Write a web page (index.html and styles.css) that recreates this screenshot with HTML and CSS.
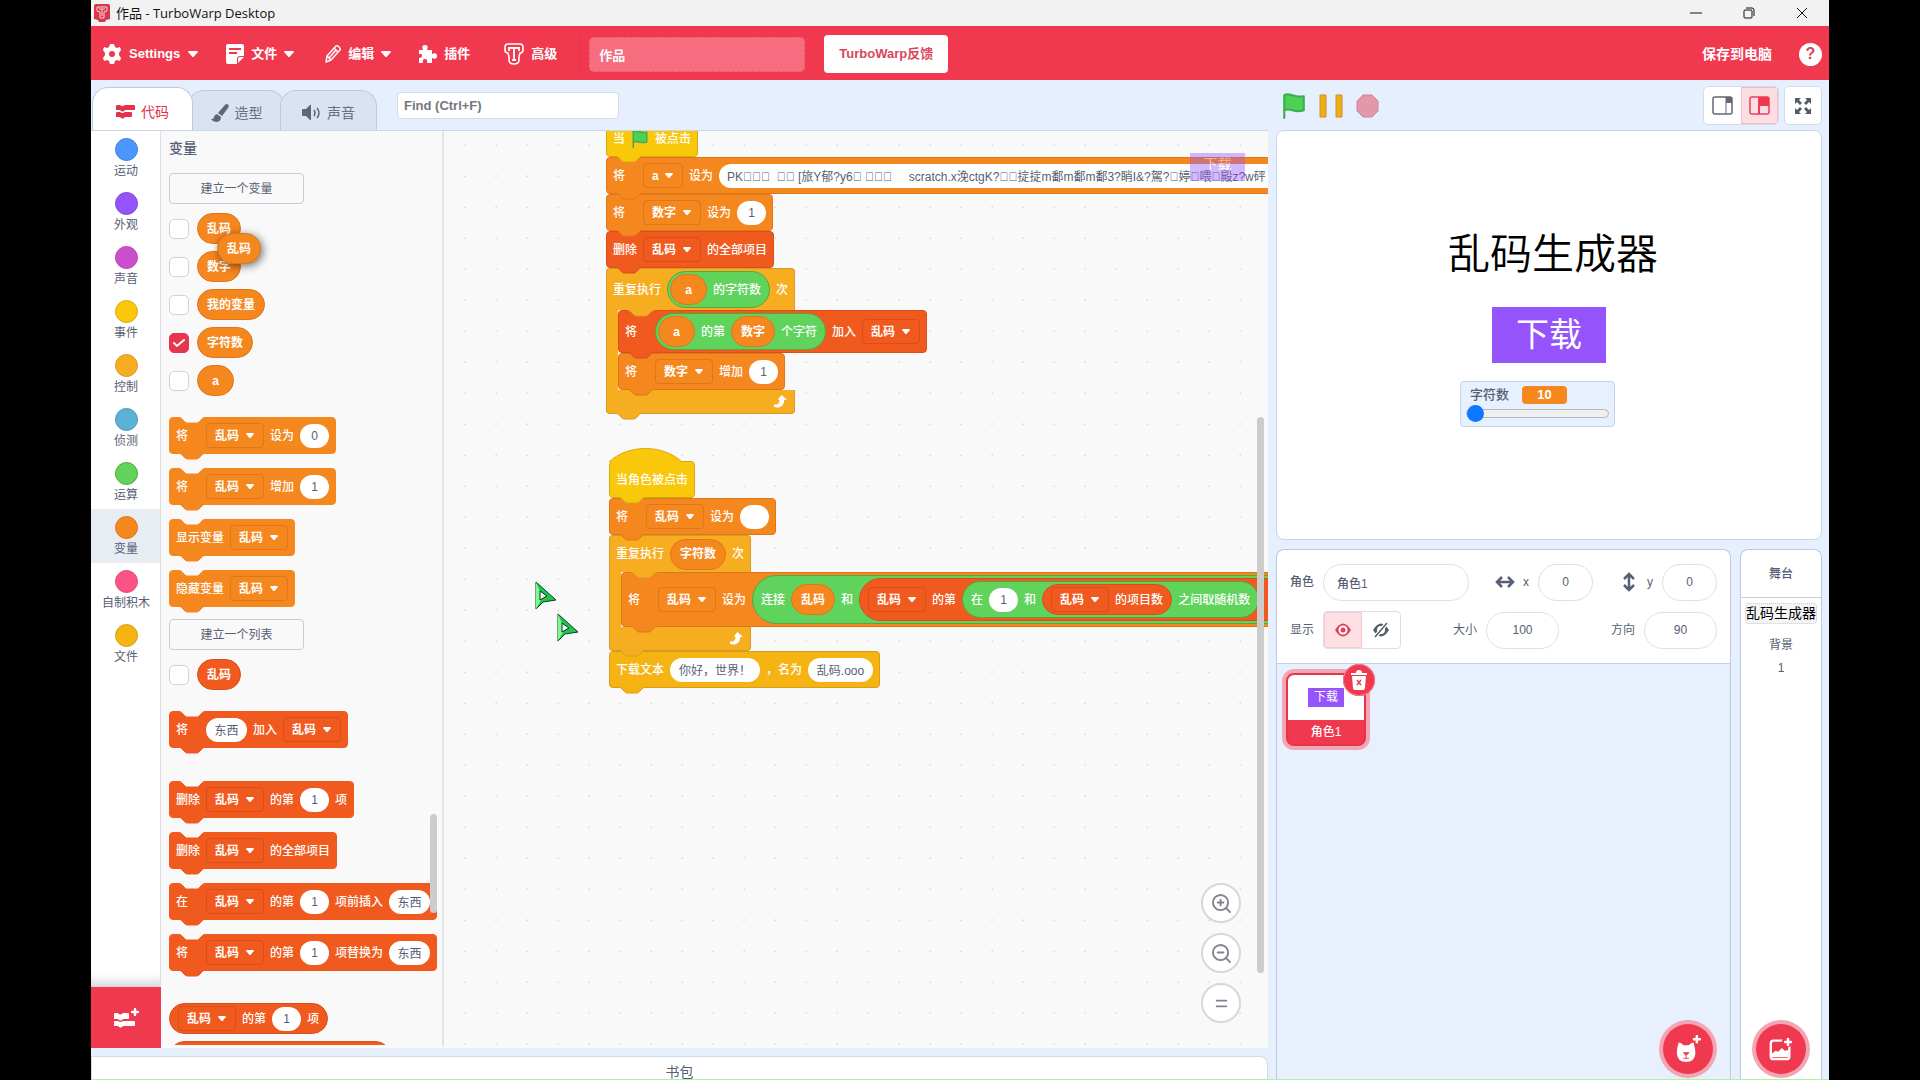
FILE: index.html
```html
<!DOCTYPE html>
<html lang="zh-CN">
<head>
<meta charset="utf-8">
<title>作品 - TurboWarp Desktop</title>
<link rel="stylesheet" href="styles.css">
</head>
<body>
<svg class="defs" aria-hidden="true">
  <symbol id="tab" viewBox="0 0 28 7"><path d="M0 0c2 0 3 1 4 2l3 3c1 1 2 1 3 1h8c1 0 2 0 3-1l3-3c1-1 2-2 4-2"/></symbol>
  <symbol id="hat" viewBox="0 0 74 15"><path d="M0 14C19-4 54-4 73 14"/></symbol>
  <symbol id="flag" viewBox="0 0 22 24"><path d="M2 23V2c5-3 9 3 18 1v13c-9 3-12-3-18 0" fill="#4cd155" stroke="#3fae50" stroke-width="2" stroke-linejoin="round" stroke-linecap="round"/></symbol>
  <symbol id="caret" viewBox="0 0 10 6"><path d="M1 0h8q2 1 0 2L6 5.500q-1 1-2 0L1 2q-2-1 0-2z" fill="#fff"/></symbol>
  <symbol id="loop" viewBox="0 0 14 14"><path d="M0 10c4 1 6-1 6-5H4l4-5 6 5h-3c0 6-4 10-11 8z" fill="#fff"/></symbol>
  <symbol id="cursor" viewBox="0 0 22 29"><path d="M1 1v27l7-7 13-2z" fill="#1fc64a" stroke="#0b3d1a"/><path d="M1 1l5 12v6l-5 9z" fill="#7dfa8f"/><path d="M5 10l7 5-7 4z" fill="#e9ffe9" stroke="#123"/></symbol>
  <symbol id="plus" viewBox="0 0 8 8"><path d="M4 1v6M1 4h6" stroke="#fff" stroke-width="2.400" stroke-linecap="round"/></symbol>
  <symbol id="tee" viewBox="0 0 20 22"><path d="M4 1h12q3 0 3 3v3q0 3-3 3v1q-1 1-1 3v3q0 4-5 4t-5-4v-3q0-2-1-3v-1q-3 0-3-3V4q0-3 3-3z" fill="none" stroke="#fff" stroke-width="1.600"/><path d="M5 8V5h10v3M10 5v11M8 17h4" fill="none" stroke="#fff" stroke-width="1.800"/></symbol>
</svg>

<div class="window">
  <header class="titlebar">
    <svg class="app-icon" viewBox="0 0 16 18"><path d="M0 2q0-2 2-2h12q2 0 2 2v13l-4 1-1 2H5l-1-2-4-1z" fill="#d8374c"/><path d="M3 3h10v4l-3 1v6H6V8L3 7z" fill="none" stroke="#fbd3d8"/><path d="M5 5h6M8 5v7" stroke="#fbd3d8"/></svg>
    <h1>作品 - TurboWarp Desktop</h1>
    <div class="win-buttons">
      <button aria-label="最小化"><svg width="12" height="12"><path d="M0 6h12" stroke="#111"/></svg></button>
      <button aria-label="还原"><svg width="12" height="12" fill="none" stroke="#111"><rect x="1" y="3" width="8" height="8" rx="1"/><path d="M3 1h6q2 0 2 2v6"/></svg></button>
      <button aria-label="关闭"><svg width="12" height="12"><path d="M1 1l10 10M11 1L1 11" stroke="#111"/></svg></button>
    </div>
  </header>

  <nav class="menubar">
    <button class="m-set"><svg width="18" height="20" viewBox="0 0 18 20"><path d="M7 0h4l1 3 2 1 3-1 1 3-2 3v2l2 3-1 3-3-1-2 1-1 3H7l-1-3-2-1-3 1-1-3 2-3V9L0 6l1-3 3 1 2-1z" fill="#fff"/><circle cx="9" cy="10" r="3" fill="#f0384f"/></svg><span>Settings</span><svg class="caret"><use href="#caret"/></svg></button>
    <button class="m-file"><svg width="18" height="20" viewBox="0 0 18 20"><path d="M2 0h14q2 0 2 2v10h-4q-3 0-3 3v5H2q-2 0-2-2V2q0-2 2-2zM12 19v-4q0-2 2-2h4z" fill="#fff"/><path d="M3 5h12M3 9h8" stroke="#f0384f" stroke-width="2"/></svg><span>文件</span><svg class="caret"><use href="#caret"/></svg></button>
    <button class="m-edit"><svg width="16" height="18" viewBox="0 0 16 18"><path d="M1 17l1-6L11 1q1-1 3 1t1 3L6 15zM9 3l4 4M11 5L4 13M2 11l4 4" fill="none" stroke="#fff" stroke-width="1.500" stroke-linejoin="round"/></svg><span>编辑</span><svg class="caret"><use href="#caret"/></svg></button>
    <button class="m-ext"><svg width="19" height="19" viewBox="0 0 19 19"><path d="M1 5h4q-2-5 2-5t2 5h5v4q5-2 5 2t-5 2v5h-5q1-4-2-4t-2 4H1v-5q3 0 3-2.500T1 9z" fill="#fff"/></svg><span>插件</span></button>
    <button class="m-adv"><svg width="20" height="22"><use href="#tee"/></svg><span>高级</span></button>
    <span class="divider"></span>
    <input class="project-name" aria-label="作品名称" value="作品">
    <button class="feedback">TurboWarp反馈</button>
    <button class="save">保存到电脑</button>
    <button class="help" aria-label="帮助">?</button>
  </nav>

  <main class="main">
    <section class="editor">
      <div class="tabs" role="tablist">
        <button class="etab on" role="tab"><svg width="19" height="15" viewBox="0 0 19 15"><path d="M1 1h3q2 2 5 0h9q1 0 1 1v3q0 1-1 1H9q-2 3-5 0H0V2q0-1 1-1zM1 8h3q2 2 5 0h6q1 0 1 1v3q0 1-1 1H9q-2 3-5 0H0V9q0-1 1-1z" fill="#e2334b"/></svg>代码</button>
        <button class="etab" role="tab"><svg width="18" height="18" viewBox="0 0 18 18"><path d="M16 0q3 1 1 4l-6 8-4-3 6-7q1-2 3-2zM6 10l4 3q0 5-5 5-3 0-5-3 3 0 3-2t3-3z" fill="#5f6678"/></svg>造型</button>
        <button class="etab" role="tab"><svg width="19" height="16" viewBox="0 0 19 16"><path d="M0 5q0-1 1-1h3l4-4q1-1 1 1v13q0 2-1 1l-4-4H1q-1 0-1-1z" fill="#5f6678"/><path d="M12 5q2 3 0 6M15 3q4 5 0 10" fill="none" stroke="#5f6678" stroke-width="1.500"/></svg>声音</button>
        <input class="find" aria-label="查找" placeholder="Find (Ctrl+F)">
      </div>

      <div class="blocks">
        <nav class="cats">
          <div class="cat-list">
            <button class="cat"><i class="dot motion"></i>运动</button>
            <button class="cat"><i class="dot looks"></i>外观</button>
            <button class="cat"><i class="dot sound"></i>声音</button>
            <button class="cat"><i class="dot event"></i>事件</button>
            <button class="cat"><i class="dot control"></i>控制</button>
            <button class="cat"><i class="dot sense"></i>侦测</button>
            <button class="cat"><i class="dot op"></i>运算</button>
            <button class="cat current"><i class="dot var"></i>变量</button>
            <button class="cat"><i class="dot my"></i>自制积木</button>
            <button class="cat"><i class="dot file"></i>文件</button>
          </div>
          <button class="add-ext" aria-label="添加扩展"><svg width="25" height="20" viewBox="0 0 25 20"><path d="M1 5h3q2 3 5 0h5q1 0 1 1v4q0 1-1 1H9q-2 3-5 0H0V6q0-1 1-1zM1 13h3q2 2 5 0h11q1 0 1 1v3q0 1-1 1H9q-2 3-5 0H0v-4q0-1 1-1z" fill="#fff"/><use href="#plus" x="17" y="0" width="8" height="8"/></svg></button>
        </nav>

        <div class="palette">
          <h2>变量</h2>
          <button class="make">建立一个变量</button>
          <div class="rows">
            <label class="row"><input type="checkbox"><span class="pill var">乱码</span></label>
            <label class="row"><input type="checkbox"><span class="pill var">数字</span></label>
            <label class="row"><input type="checkbox"><span class="pill var">我的变量</span></label>
            <label class="row"><input type="checkbox" checked><span class="pill var">字符数</span></label>
            <label class="row"><input type="checkbox"><span class="pill var">a</span></label>
          </div>
          <div class="group">
            <div class="block var"><svg class="notch"><use href="#tab"/></svg><span class="lead">将</span><select aria-label="变量"><option>乱码</option></select><span>设为</span><input class="n" aria-label="值" value="0"><svg class="tab"><use href="#tab"/></svg></div>
            <div class="block var"><svg class="notch"><use href="#tab"/></svg><span class="lead">将</span><select aria-label="变量"><option>乱码</option></select><span>增加</span><input class="n" aria-label="值" value="1"><svg class="tab"><use href="#tab"/></svg></div>
            <div class="block var"><svg class="notch"><use href="#tab"/></svg><span>显示变量</span><select aria-label="变量"><option>乱码</option></select><svg class="tab"><use href="#tab"/></svg></div>
            <div class="block var"><svg class="notch"><use href="#tab"/></svg><span>隐藏变量</span><select aria-label="变量"><option>乱码</option></select><svg class="tab"><use href="#tab"/></svg></div>
          </div>
          <button class="make list-make">建立一个列表</button>
          <div class="rows">
            <label class="row"><input type="checkbox"><span class="pill list">乱码</span></label>
          </div>
          <div class="group">
            <div class="block list"><svg class="notch"><use href="#tab"/></svg><span class="lead">将</span><input class="s2" aria-label="内容" value="东西"><span>加入</span><select aria-label="列表"><option>乱码</option></select><svg class="tab"><use href="#tab"/></svg></div>
          </div>
          <div class="group far">
            <div class="block list"><svg class="notch"><use href="#tab"/></svg><span>删除</span><select aria-label="列表"><option>乱码</option></select><span>的第</span><input class="n" aria-label="序号" value="1"><span>项</span><svg class="tab"><use href="#tab"/></svg></div>
            <div class="block list"><svg class="notch"><use href="#tab"/></svg><span>删除</span><select aria-label="列表"><option>乱码</option></select><span>的全部项目</span><svg class="tab"><use href="#tab"/></svg></div>
            <div class="block list"><svg class="notch"><use href="#tab"/></svg><span class="lead">在</span><select aria-label="列表"><option>乱码</option></select><span>的第</span><input class="n" aria-label="序号" value="1"><span>项前插入</span><input class="s2" aria-label="内容" value="东西"><svg class="tab"><use href="#tab"/></svg></div>
            <div class="block list"><svg class="notch"><use href="#tab"/></svg><span class="lead">将</span><select aria-label="列表"><option>乱码</option></select><span>的第</span><input class="n" aria-label="序号" value="1"><span>项替换为</span><input class="s2" aria-label="内容" value="东西"><svg class="tab"><use href="#tab"/></svg></div>
          </div>
          <div class="reporters">
            <div class="rep list h31"><select aria-label="列表"><option>乱码</option></select><span>的第</span><input class="n" aria-label="序号" value="1"><span>项</span></div>
            <div class="rep list h31 next"></div>
          </div>
          <span class="pill var dragged">乱码</span>
          <span class="scroll flyout-scroll"></span>
        </div>

        <div class="canvas">
          <div class="stack one">
            <div class="block event"><span>当</span><svg width="18" height="18"><use href="#flag"/></svg><span>被点击</span><svg class="tab"><use href="#tab"/></svg></div>
            <div class="block var"><span class="lead">将</span><select aria-label="变量"><option>a</option></select><span>设为</span><input class="long" aria-label="值" value="PK&#xE5E5;&#xE5E5;&#xE5E5;  &#xE5E5;&#xE5E5; [旅Y郁?y6&#xE5E5; &#xE5E5;&#xE5E5;&#xE5E5;     scratch.x浼ctgK?&#xE5E5;&#xE5E5;掟掟m鄱m鄱m鄱3?睄I&amp;?駕?&#xE5E5;婷&#xE5E5;喂&#xE5E5;殿z?w砰"><svg class="tab"><use href="#tab"/></svg></div>
            <div class="block var"><span class="lead">将</span><select aria-label="变量"><option>数字</option></select><span>设为</span><input class="n" aria-label="值" value="1"><svg class="tab"><use href="#tab"/></svg></div>
            <div class="block list"><span>删除</span><select aria-label="列表"><option>乱码</option></select><span>的全部项目</span><svg class="tab"><use href="#tab"/></svg></div>
            <div class="cblock">
              <div class="block control c-head tall"><span>重复执行</span><div class="rep op h37"><span class="pill var">a</span><span>的字符数</span></div><span>次</span><svg class="tab inset"><use href="#tab"/></svg></div>
              <div class="c-body control">
                <div class="block list mid"><span class="lead">将</span><div class="rep op h37"><span class="pill var">a</span><span>的第</span><span class="pill var">数字</span><span>个字符</span></div><span>加入</span><select aria-label="列表"><option>乱码</option></select><svg class="tab"><use href="#tab"/></svg></div>
                <div class="block var"><span class="lead">将</span><select aria-label="变量"><option>数字</option></select><span>增加</span><input class="n" aria-label="值" value="1"><svg class="tab"><use href="#tab"/></svg></div>
              </div>
              <div class="block control c-foot"><svg width="13" height="13"><use href="#loop"/></svg><svg class="tab"><use href="#tab"/></svg></div>
            </div>
          </div>

          <div class="stack two">
            <div class="block event"><svg class="hat"><use href="#hat"/></svg><span>当角色被点击</span><svg class="tab"><use href="#tab"/></svg></div>
            <div class="block var"><span class="lead">将</span><select aria-label="变量"><option>乱码</option></select><span>设为</span><input class="n" aria-label="值" value=""><svg class="tab"><use href="#tab"/></svg></div>
            <div class="cblock">
              <div class="block control c-head"><span>重复执行</span><span class="pill var">字符数</span><span>次</span><svg class="tab inset"><use href="#tab"/></svg></div>
              <div class="c-body control">
                <div class="block var big"><span class="lead">将</span><select aria-label="变量"><option>乱码</option></select><span>设为</span>
                  <div class="rep op h49 text-first"><span>连接</span><span class="pill var">乱码</span><span>和</span>
                    <div class="rep list h43 open"><select aria-label="列表"><option>乱码</option></select><span>的第</span>
                      <div class="rep op h37 text-first"><span>在</span><input class="n" aria-label="最小" value="1"><span>和</span>
                        <div class="rep list h31"><select aria-label="列表"><option>乱码</option></select><span>的项目数</span></div>
                        <span>之间取随机数</span></div>
                    </div>
                  </div><svg class="tab"><use href="#tab"/></svg></div>
              </div>
              <div class="block control c-foot"><svg width="13" height="13"><use href="#loop"/></svg><svg class="tab"><use href="#tab"/></svg></div>
            </div>
            <div class="block file"><span>下载文本</span><input class="s6" aria-label="文本" value="你好，世界！"><span>，名为</span><input class="s4" aria-label="文件名" value="乱码.ooo"><svg class="tab"><use href="#tab"/></svg></div>
          </div>

          <svg class="cursor c1"><use href="#cursor"/></svg>
          <svg class="cursor c2"><use href="#cursor"/></svg>
          <span class="ghost">下载</span>
          <span class="scroll canvas-scroll"></span>
          <div class="zoom">
            <button aria-label="放大"><svg width="20" height="20" viewBox="0 0 20 20"><circle cx="9" cy="9" r="8"/><path d="M15 15l4 4M9 6v6M6 9h6"/></svg></button>
            <button aria-label="缩小"><svg width="20" height="20" viewBox="0 0 20 20"><circle cx="9" cy="9" r="8"/><path d="M15 15l4 4M6 9h6"/></svg></button>
            <button aria-label="重置缩放"><svg width="20" height="20" viewBox="0 0 20 20"><path d="M5 7h10M5 13h10"/></svg></button>
          </div>
        </div>
      </div>
      <button class="backpack">书包</button>
    </section>

    <section class="side">
      <div class="stage-bar">
        <button aria-label="运行"><svg width="24" height="26"><use href="#flag"/></svg></button>
        <button aria-label="暂停"><svg width="24" height="24"><path d="M1 1h6v22H1zM17 1h6v22h-6z" fill="#ecae1b" stroke="#d08f20"/></svg></button>
        <button aria-label="停止"><svg width="23" height="24"><path d="M7 1h9l6 6v10l-6 6H7l-6-6V7z" fill="#e398aa" stroke="#cc8596"/></svg></button>
        <div class="sizes">
          <button aria-label="小舞台"><svg width="21" height="19"><rect x="1" y="1" width="19" height="17" rx="2" fill="none" stroke="#667" stroke-width="1.500"/><path d="M14 1v17" stroke="#667"/><path d="M14 1h6v6h-6z" fill="#667"/></svg></button><button class="on" aria-label="大舞台"><svg width="21" height="19"><rect x="1" y="1" width="19" height="17" rx="2" fill="none" stroke="#e8405a" stroke-width="1.500"/><path d="M10 1v17" stroke="#e8405a" stroke-width="2"/><path d="M10 1h10v9H10z" fill="#ef3850"/></svg></button>
        </div>
        <button class="full" aria-label="全屏"><svg width="18" height="18" fill="#555b66"><path d="M1 1h6L5 3l3 3-2 2-3-3-2 2zM17 1h-6l2 2-3 3 2 2 3-3 2 2zM1 17h6l-2-2 3-3-2-2-3 3-2-2zM17 17h-6l2-2-3-3 2-2 3 3 2-2z"/></svg></button>
      </div>
      <div class="stage">
        <p class="stage-title">乱码生成器</p>
        <button class="sprite">下载</button>
        <label class="monitor"><span class="mon-top">字符数<output>10</output></span><input type="range" min="10" max="100" value="10"></label>
      </div>
      <div class="panes">
        <div class="sprites">
          <div class="info">
            <div class="line">
              <label class="b">角色<input class="name" value="角色1"></label>
              <label><svg width="18" height="12" viewBox="0 0 18 12"><path d="M3 6h12M6 1L1 6l5 5M12 1l5 5-5 5" fill="none" stroke="#575e75" stroke-width="2.500"/></svg><span>x</span><input class="xy" value="0"></label>
              <label><svg width="18" height="20" viewBox="0 0 18 20"><path d="M9 4v12M4 7l5-5 5 5M4 13l5 5 5-5" fill="none" stroke="#575e75" stroke-width="2.500"/></svg><span>y</span><input class="xy" value="0"></label>
            </div>
            <div class="line">
              <div class="show"><span>显示</span><div class="eyes"><button class="on" aria-label="显示"><svg width="18" height="16"><path d="M1 8q8-13 16 0-8 13-16 0z" fill="#e2405a"/><circle cx="9" cy="8" r="4.500" fill="#fff"/><circle cx="9" cy="8" r="2.500" fill="#e2405a"/></svg></button><button aria-label="隐藏"><svg width="18" height="16"><path d="M1 8q8-13 16 0-8 13-16 0z" fill="#575e66"/><circle cx="9" cy="8" r="4" fill="#fff"/><path d="M3 15L15 1" stroke="#fff" stroke-width="4"/><path d="M3 15L15 1" stroke="#575e66" stroke-width="1.500"/></svg></button></div></div>
              <label>大小<input class="sz" value="100"></label>
              <label>方向<input class="sz" value="90"></label>
            </div>
          </div>
          <div class="list-area">
            <div class="tile"><div class="thumb"><span>下载</span></div><div class="tname">角色1</div>
              <button class="del" aria-label="删除"><svg width="16" height="20" viewBox="0 0 16 20"><path d="M5 3q0-3 3-3t3 3h5v2H0V3zM1 6h14l-1 12q0 2-2 2H4q-2 0-2-2z" fill="#fff"/><path d="M6 10l4 5M10 10l-4 5" stroke="#e2405a" stroke-width="1.500"/></svg></button>
            </div>
            <button class="fab" aria-label="选择一个角色"><svg width="26" height="28" viewBox="0 0 28 30"><path d="M4 8q3 0 5 3h6q2-3 5-3 2 7 2 12-1 9-10 9T2 20Q2 13 4 8z" fill="#fff"/><path d="M9 19h6l-3 3zM12 22v3M9 25h6" fill="#f0384f" stroke="#f0384f"/><use href="#plus" x="19" y="0" width="9" height="9"/></svg></button>
          </div>
        </div>
        <div class="stage-sel">
          <h2>舞台</h2>
          <div class="sel-body"><div class="backdrop">乱码生成器</div><p>背景</p><p>1</p>
            <button class="fab" aria-label="选择一个背景"><svg width="26" height="28" viewBox="0 0 28 30"><rect x="3" y="6" width="20" height="20" rx="3" fill="none" stroke="#fff" stroke-width="2.500"/><path d="M4 20l4-3 3 1 4-4 3 3 4-1v8H4z" fill="#fff"/><circle cx="21" cy="7" r="6" fill="#f0384f"/><use href="#plus" x="17" y="3" width="9" height="9"/></svg></button>
          </div>
        </div>
      </div>
    </section>
  </main>
</div>
</body>
</html>
```
FILE: styles.css
```css
* { box-sizing: border-box; }
body {
  margin: 0;
  background: #000;
  color: #575e75;
  font: 12px/16px "Liberation Sans", "Noto Sans CJK SC", sans-serif;
}
h1, h2, p { margin: 0; font: inherit; }
button, input, select { font: inherit; color: inherit; border: 0; padding: 0; margin: 0; background: none; border-radius: 0; }
svg { display: block; flex: none; overflow: visible; }
.defs { position: absolute; width: 0; height: 0; overflow: hidden; }

.window {
  margin: 0 91px;
  height: 100vh;
  display: flex;
  flex-direction: column;
  background: #e6effd;
  border-bottom: 1px solid #a9f79a;
  overflow: hidden;
}

/* title bar */
.titlebar { height: 26px; flex: none; display: flex; align-items: center; gap: 6px; padding: 0 21px 0 3px; background: #f2f2f2; color: #111; }
.titlebar h1 { font: 13px/20px "Open Sans", "Noto Sans CJK SC", sans-serif; }
.app-icon { width: 16px; height: 18px; }
.win-buttons { margin-left: auto; display: flex; gap: 41px; }

/* menu bar */
.menubar { height: 54px; flex: none; display: flex; align-items: center; padding: 2px 7px 0 12px; background: #f0384f; color: #fff; font-size: 13px; font-weight: 700; }
.menubar > button { display: flex; align-items: center; gap: 7px; }
.caret { width: 10px; height: 6px; }
.menubar .m-set { gap: 8px; margin-right: 28px; }
.menubar .m-file { margin-right: 31px; }
.menubar .m-edit { margin-right: 27px; }
.menubar .m-ext { margin-right: 34px; }
.menubar .m-adv { margin-right: 22px; }
.divider { height: 38px; border-left: 1px dotted #d32f46; }
.project-name { width: 216px; height: 35px; margin: 0 19px 0 9px; padding: 0 9px; border-radius: 5px; background: #f56d7f; border: 1px dashed #f0586c; }
.menubar .feedback { height: 38px; padding: 0 15px; border-radius: 4px; background: #fff; color: #d8475b; }
.menubar .save { margin: 0 27px 0 auto; font-size: 14px; }
.menubar .help { width: 23px; height: 23px; justify-content: center; border-radius: 50%; background: #fff; color: #e2405a; font-size: 16px; }

.main { flex: 1; min-height: 0; display: grid; grid-template-columns: minmax(0, 1fr) 546px; gap: 8px; padding-right: 7px; }
.editor { display: flex; flex-direction: column; min-height: 0; min-width: 0; }

/* editor tabs */
.tabs { height: 50px; flex: none; display: flex; align-items: flex-end; padding-left: 1px; }
.etab { height: 40px; width: 97px; margin-left: -5px; display: flex; align-items: center; justify-content: center; gap: 6px; padding-top: 5px; font-size: 14px; color: #6a7186; background: #d9e3f2; border: 1px solid #bccbe0; border-bottom: 0; border-radius: 16px 16px 0 0; }
.etab.on { width: 101px; height: 43px; margin-left: 0; background: #fff; color: #e2334b; position: relative; z-index: 1; }
.find { width: 222px; height: 27px; margin: 0 0 11px 20px; align-self: flex-end; padding: 0 6px; background: #fff; border: 1px solid #d5dbe4; border-radius: 4px; font-size: 13px; font-weight: 700; }
.find::placeholder { color: #73777f; opacity: 1; }

.blocks { flex: 1; min-height: 0; display: flex; border-top: 1px solid #ccd8e8; overflow: hidden; }

/* categories */
.cats { width: 70px; flex: none; display: flex; flex-direction: column; background: #fff; }
.cat-list { flex: 1; min-height: 0; overflow: hidden; border-right: 1px solid #dcdfe5; box-shadow: inset 0 -14px 12px -10px #ccc; }
.cat { width: 100%; height: 54px; display: flex; flex-direction: column; align-items: center; gap: 2px; padding: 7px 0 0 1px; font-size: 12px; }
.cat.current { background: #e8ecf3; }
.dot { width: 23px; height: 23px; border-radius: 50%; border: 1px solid var(--s); background: var(--c); }
.add-ext { height: 61px; flex: none; display: grid; place-items: center; background: #f0384f; }

/* block colours */
.motion { --c: #4c97ff; --s: #4280d7; }
.looks { --c: #9453fb; --s: #774dcb; }
.sound { --c: #c94fcb; --s: #bd42bd; }
.event { --c: #fac80b; --s: #d5aa10; }
.control { --c: #f7ad20; --s: #d69a2c; }
.sense { --c: #5cb1d6; --s: #4a9bbd; }
.op { --c: #60d35d; --s: #5aa53c; }
.var { --c: #f5871f; --s: #df7618; }
.list { --c: #f15a1e; --s: #d94f17; }
.my { --c: #fb5385; --s: #e04c77; }
.file { --c: #f5b414; --s: #d69f17; }

/* palette */
.palette { width: 283px; flex: none; position: relative; overflow: hidden; padding: 8px 0 0 8px; background: #f9f9f9; border-right: 2px solid #e4e4e6; border-bottom: 3px solid #f9f9f9; }
.palette h2 { font-size: 14px; line-height: 18px; margin-bottom: 16px; font-weight: 500; }
.make { display: block; width: 135px; height: 31px; border: 1px solid #c9ccd3; border-radius: 4px; }
.list-make { margin-top: 12px; }
.rows { display: flex; flex-direction: column; align-items: flex-start; gap: 7px; margin-top: 9px; }
.row { display: flex; align-items: center; gap: 8px; }
.row input { appearance: none; width: 20px; height: 20px; background: #fff; border: 1px solid #cfd2d8; border-radius: 5px; }
.row input:checked { background: #e8344e url('data:image/svg+xml,<svg xmlns="http://www.w3.org/2000/svg" width="12" height="10"><path d="M1 5l3 3 7-6" fill="none" stroke="white" stroke-width="2" stroke-linecap="round"/></svg>') center no-repeat; border-color: #e8344e; }
.group { display: flex; flex-direction: column; align-items: flex-start; gap: 14px; margin-top: 21px; }
.group.far { margin-top: 33px; }
.reporters { display: flex; flex-direction: column; align-items: flex-start; gap: 7px; margin-top: 32px; }

/* blocks */
.block, .rep, .pill { display: flex; align-items: center; width: max-content; white-space: nowrap; color: #fff; font-weight: 500; background: var(--c); border: 1px solid var(--s); }
.block { position: relative; height: 37px; gap: 6px; padding: 0 6px; border-radius: 4px; }
.palette .block { border-color: var(--c); }
.lead { min-width: 24px; }
.pill { height: 31px; min-width: 37px; justify-content: center; padding: 0 9px; border-radius: 16px; font-weight: 700; }
.rep { gap: 6px; padding: 0 8px; border-radius: 25px; }
.op { padding-left: 2px; }
.text-first { padding-left: 8px; }
.rep.open { padding-right: 40px; }
.rep.next { width: 222px; }
.h31 { height: 31px; flex: none; }
.h37 { height: 37px; }
.h43 { height: 43px; }
.h49 { height: 49px; }
.block.tall { height: 42px; }
.block.mid { height: 43px; }
.block.big { height: 55px; }
.tab, .notch, .hat { position: absolute; left: 8px; width: 28px; height: 7px; z-index: 1; fill: var(--c); stroke: var(--s); }
.tab { bottom: -7px; }
.palette .tab { stroke: var(--c); }
.notch { top: -1px; fill: #f9f9f9; stroke: var(--c); }
.tab.inset { left: 20px; }
.hat { left: -1px; top: -14px; width: 74px; height: 15px; }
select { appearance: none; height: 25px; padding: 0 23px 0 8px; border: 1px solid var(--s); border-radius: 4px; background: url('data:image/svg+xml,<svg xmlns="http://www.w3.org/2000/svg" width="8" height="5"><path d="M1 0h6q2 1 0 2L5 4.500q-1 1-2 0L1 2q-2-1 0-2z" fill="white"/></svg>') right 9px center no-repeat; font-weight: 700; }
.block input, .rep input { height: 24px; border-radius: 12px; background: #fff; color: #575e75; text-align: center; font-weight: 400; }
.n { width: 29px; }
.s2 { width: 41px; }
.s4 { width: 65px; }
.s6 { width: 90px; }
.block .long { width: 640px; padding-left: 8px; text-align: left; white-space: pre; }
.cblock { width: max-content; }
.c-head { border-bottom: 0; border-radius: 4px 4px 0 0; }
.c-body { width: 12px; padding-left: 12px; background: var(--c); box-shadow: inset 1px 0 var(--s); }
.block.c-foot { width: auto; height: 24px; border-top: 0; border-radius: 0 0 4px 4px; justify-content: flex-end; padding-right: 7px; }

.dragged { position: absolute; left: 56px; top: 102px; z-index: 2; box-shadow: 2px 2px 8px #0008; }
.scroll { position: absolute; width: 7px; border-radius: 4px; background: #ccc; z-index: 3; }
.flyout-scroll { right: 5px; top: 683px; height: 99px; }
.canvas-scroll { right: 4px; top: 286px; height: 556px; }

/* scripting canvas */
.canvas { flex: 1; min-width: 0; position: relative; overflow: hidden; background: #f9f9f9 radial-gradient(circle, #e2e2e2 1px, transparent 1px) 6px 30px / 31px 31px; }
.stack { position: absolute; }
.stack.one { left: 162px; top: -11px; }
.stack.two { left: 165px; top: 330px; }
.cursor { position: absolute; width: 22px; height: 29px; }
.c1 { left: 91px; top: 450px; }
.c2 { left: 113px; top: 482px; }
.ghost { position: absolute; left: 746px; top: 22px; z-index: 2; width: 55px; height: 28px; background: #9453fb; color: #fff; font-size: 14px; line-height: 22px; text-align: center; opacity: .4; }
.zoom { position: absolute; right: 27px; bottom: 25px; display: flex; flex-direction: column; gap: 10px; }
.zoom button { width: 40px; height: 40px; display: grid; place-items: center; border-radius: 50%; background: #fff; border: 2px solid #d8d8d8; }
.zoom svg { width: 19px; height: 19px; fill: none; stroke: #808490; stroke-width: 2; stroke-linecap: round; }

.backpack { height: 23px; flex: none; margin-top: 8px; overflow: hidden; background: #fff; border: 1px solid #d3dceb; border-bottom: 0; border-radius: 0 8px 0 0; font-size: 14px; line-height: 30px; }

/* stage */
.side { display: flex; flex-direction: column; min-height: 0; }
.stage-bar { height: 50px; flex: none; display: flex; align-items: center; gap: 13px; padding: 1px 0 0 6px; }
.sizes { margin-left: auto; display: flex; background: #fff; border: 1px solid #d3dbe8; border-radius: 5px; overflow: hidden; }
.sizes button { width: 37px; height: 37px; display: grid; place-items: center; }
.sizes .on { background: #fcdde2; box-shadow: inset 0 0 0 1px #f0bcc5; }
.full { width: 38px; height: 39px; margin-left: -8px; display: grid; place-items: center; background: #fff; border: 1px solid #d3dbe8; border-radius: 5px; }
.stage { position: relative; flex: none; aspect-ratio: 4 / 3; background: #fff; border: 1px solid #c8d6e9; border-radius: 8px; overflow: hidden; }
.stage-title { position: absolute; left: 171px; top: 94px; font-size: 42px; line-height: 60px; color: #000; font-weight: 350; }
.sprite { position: absolute; left: 215px; top: 176px; width: 114px; height: 56px; background: #9453fb; color: #fff; font-size: 33px; }
.monitor { position: absolute; left: 183px; top: 250px; width: 155px; height: 46px; padding: 4px 5px; background: #e6f0ff; border: 1px solid #c4d3e2; border-radius: 4px; }
.mon-top { display: flex; align-items: center; gap: 13px; height: 18px; padding-left: 4px; font-size: 13px; font-weight: 500; }
.mon-top output { width: 45px; height: 18px; border-radius: 4px; background: #f5871f; color: #fff; text-align: center; line-height: 18px; font-weight: 700; }
.monitor input { appearance: none; display: block; width: 100%; height: 18px; }
.monitor input::-webkit-slider-runnable-track { height: 9px; border: 1px solid #b8b8b8; border-radius: 5px; background: #efefef; }
.monitor input::-webkit-slider-thumb { appearance: none; width: 17px; height: 17px; margin-top: -5px; border-radius: 50%; background: #0a78ff; }

/* sprite pane */
.panes { flex: 1; min-height: 0; margin-top: 9px; display: grid; grid-template-columns: minmax(0, 1fr) 82px; gap: 9px; }
.sprites, .stage-sel { display: flex; flex-direction: column; min-height: 0; border: 1px solid #bccbe3; border-bottom: 0; border-radius: 8px 8px 0 0; background: #fff; overflow: hidden; }
.info { height: 114px; flex: none; padding: 14px 13px 0; border-bottom: 1px solid #c3d0e2; }
.line { display: flex; justify-content: space-between; align-items: center; height: 37px; margin-bottom: 11px; }
.line label, .show { display: flex; align-items: center; gap: 9px; }
.b { font-weight: 500; }
.line input { height: 37px; border: 1px solid #dde0e6; border-radius: 19px; text-align: center; }
.line .name { width: 146px; padding: 0 13px; text-align: left; font-weight: 500; }
.xy { width: 55px; }
.sz { width: 73px; }
.eyes { display: flex; border: 1px solid #dcdfe6; border-radius: 4px; overflow: hidden; }
.eyes button { width: 38px; height: 36px; display: grid; place-items: center; }
.eyes .on { background: #fddfe4; box-shadow: inset 0 0 0 1px #f3c8cf; }
.list-area { flex: 1; position: relative; background: #e8f0fd; padding: 9px; }
.tile { position: relative; width: 80px; height: 73px; border: 2px solid #e0354d; border-radius: 8px; background: #f0384f; box-shadow: 0 0 0 4px #f4a5b3; }
.thumb { height: 45px; display: grid; place-items: center; border-radius: 6px 6px 0 0; background: #fff; }
.thumb span { width: 36px; height: 19px; background: #9453fb; color: #fff; line-height: 18px; text-align: center; }
.tname { line-height: 24px; text-align: center; color: #fff; font-weight: 500; }
.del { position: absolute; right: -11px; top: -11px; width: 32px; height: 32px; display: grid; place-items: center; border-radius: 50%; background: #f0384f; box-shadow: inset 0 0 0 1px #f4788a; }
.fab { position: absolute; right: 17px; bottom: 5px; width: 50px; height: 50px; display: grid; place-items: center; border-radius: 50%; background: #f0384f; box-shadow: 0 0 0 4px #f4a5b3; }
.stage-sel { text-align: center; }
.stage-sel h2 { height: 48px; flex: none; line-height: 48px; border-bottom: 1px solid #c3d0e2; font-weight: 500; }
.sel-body { flex: 1; position: relative; padding-top: 5px; }
.backdrop { height: 21px; margin: 0 4px 13px; border: 1px dotted #ccc; border-radius: 4px; background: #f5f5f5; color: #000; font-size: 14px; line-height: 18px; }
.stage-sel p { margin-bottom: 7px; }
.stage-sel .fab { right: 15px; }
```
